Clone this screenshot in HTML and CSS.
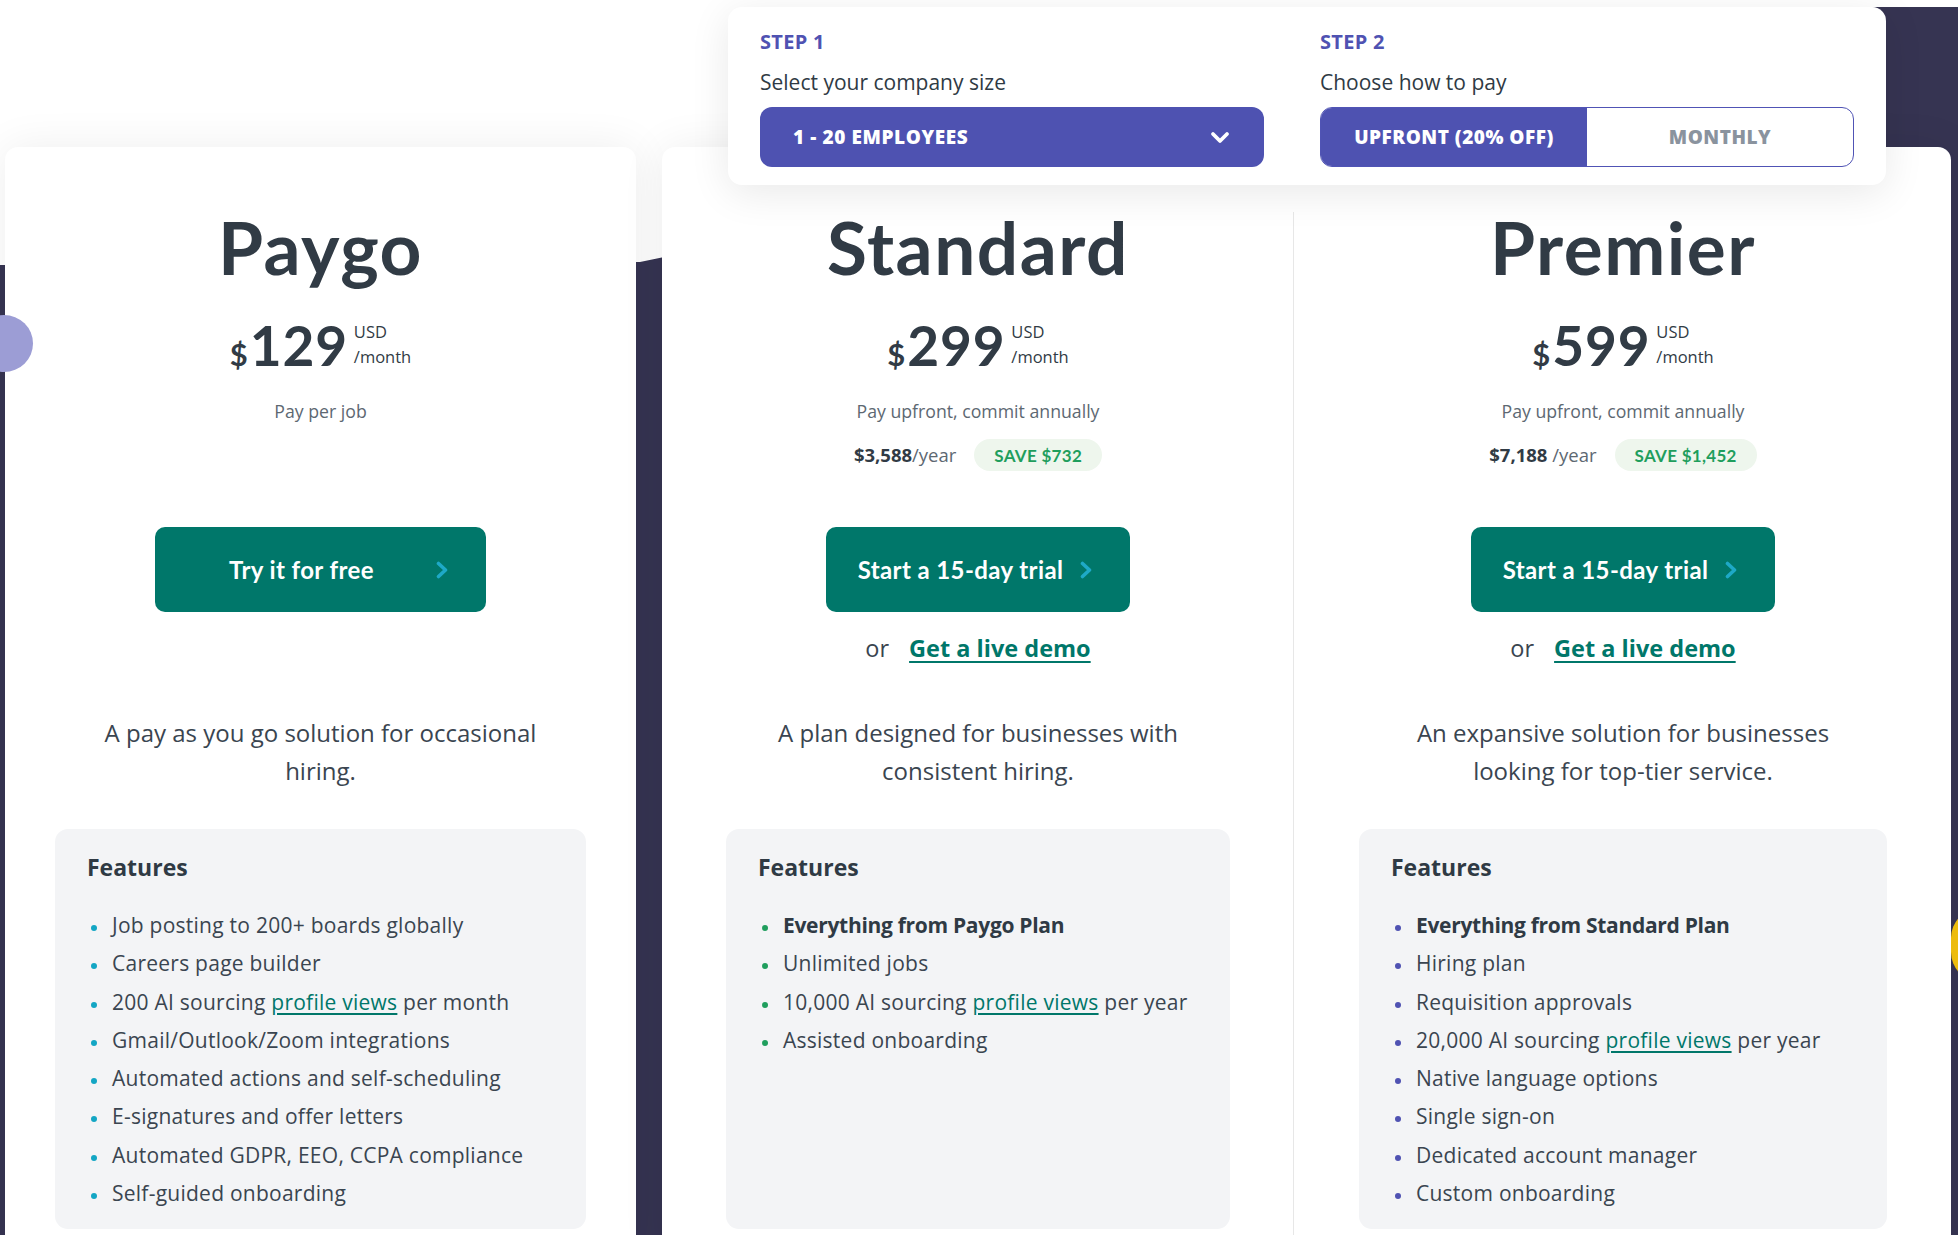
FILE: index.html
```html
<!DOCTYPE html>
<html lang="en">
<head>
<meta charset="utf-8">
<title>Pricing</title>
<link rel="stylesheet" href="styles.css">
</head>
<body>
<div class="page">
  <div class="bg-shape"></div>
  <div class="dot dot-yellow"></div>

  <div class="plans">
    <section class="card card-single">
      <div class="plan plan-paygo">
        <h2 class="plan-title">Paygo</h2>
        <div class="price"><span class="cur">$</span><span class="amount">129</span><span class="per">USD<br>/month</span></div>
        <div class="meta">
          <p class="note">Pay per job</p>
        </div>
        <a class="btn btn-wide" href="#"><span>Try it for free</span><svg class="chev" viewBox="0 0 13 18" width="13" height="18"><path d="M2.5 2.5 L9.5 9 L2.5 15.5" fill="none" stroke="#1ea9c7" stroke-width="3.6" stroke-linecap="round" stroke-linejoin="round"/></svg></a>
        <div class="demo"></div>
        <p class="desc">A pay as you go solution for occasional<br>hiring.</p>
        <div class="features">
          <h3>Features</h3>
          <ul>
            <li>Job posting to 200+ boards globally</li>
            <li>Careers page builder</li>
            <li>200 AI sourcing <a href="#">profile views</a> per month</li>
            <li>Gmail/Outlook/Zoom integrations</li>
            <li>Automated actions and self-scheduling</li>
            <li>E-signatures and offer letters</li>
            <li>Automated GDPR, EEO, CCPA compliance</li>
            <li>Self-guided onboarding</li>
          </ul>
        </div>
      </div>
    </section>

    <section class="card card-duo">
      <div class="plan plan-standard">
        <h2 class="plan-title">Standard</h2>
        <div class="price"><span class="cur">$</span><span class="amount">299</span><span class="per">USD<br>/month</span></div>
        <div class="meta">
          <p class="note">Pay upfront, commit annually</p>
          <div class="yearly"><span class="yr"><b>$3,588</b>/year</span><span class="save">SAVE $732</span></div>
        </div>
        <a class="btn" href="#"><span>Start a 15-day trial</span><svg class="chev" viewBox="0 0 13 18" width="13" height="18"><path d="M2.5 2.5 L9.5 9 L2.5 15.5" fill="none" stroke="#1ea9c7" stroke-width="3.6" stroke-linecap="round" stroke-linejoin="round"/></svg></a>
        <div class="demo"><span class="or">or</span><a href="#">Get a live demo</a></div>
        <p class="desc">A plan designed for businesses with<br>consistent hiring.</p>
        <div class="features">
          <h3>Features</h3>
          <ul>
            <li><strong>Everything from Paygo Plan</strong></li>
            <li>Unlimited jobs</li>
            <li>10,000 AI sourcing <a href="#">profile views</a> per year</li>
            <li>Assisted onboarding</li>
          </ul>
        </div>
      </div>
      <div class="divider"></div>
      <div class="plan plan-premier">
        <h2 class="plan-title">Premier</h2>
        <div class="price"><span class="cur">$</span><span class="amount">599</span><span class="per">USD<br>/month</span></div>
        <div class="meta">
          <p class="note">Pay upfront, commit annually</p>
          <div class="yearly"><span class="yr"><b>$7,188</b> /year</span><span class="save">SAVE $1,452</span></div>
        </div>
        <a class="btn" href="#"><span>Start a 15-day trial</span><svg class="chev" viewBox="0 0 13 18" width="13" height="18"><path d="M2.5 2.5 L9.5 9 L2.5 15.5" fill="none" stroke="#1ea9c7" stroke-width="3.6" stroke-linecap="round" stroke-linejoin="round"/></svg></a>
        <div class="demo"><span class="or">or</span><a href="#">Get a live demo</a></div>
        <p class="desc">An expansive solution for businesses<br>looking for top-tier service.</p>
        <div class="features">
          <h3>Features</h3>
          <ul>
            <li><strong>Everything from Standard Plan</strong></li>
            <li>Hiring plan</li>
            <li>Requisition approvals</li>
            <li>20,000 AI sourcing <a href="#">profile views</a> per year</li>
            <li>Native language options</li>
            <li>Single sign-on</li>
            <li>Dedicated account manager</li>
            <li>Custom onboarding</li>
          </ul>
        </div>
      </div>
    </section>
  </div>

  <div class="dot dot-purple"></div>

  <div class="steps">
    <div class="step step-one">
      <div class="step-label">STEP 1</div>
      <div class="step-sub">Select your company size</div>
      <div class="select"><span>1 - 20 EMPLOYEES</span><svg viewBox="0 0 20 13" width="20" height="13"><path d="M3 3 L10 10 L17 3" fill="none" stroke="#ffffff" stroke-width="3.8" stroke-linecap="round" stroke-linejoin="round"/></svg></div>
    </div>
    <div class="step step-two">
      <div class="step-label">STEP 2</div>
      <div class="step-sub">Choose how to pay</div>
      <div class="toggle"><span class="opt opt-on">UPFRONT (20% OFF)</span><span class="opt">MONTHLY</span></div>
    </div>
  </div>
</div>
</body>
</html>
```
FILE: styles.css
```css
html, body {
  margin: 0;
  padding: 0;
  overflow: hidden;
  background: #ffffff;
}

body {
  font-family: "Open Sans", "Liberation Sans", sans-serif;
  color: #333d47;
}

.page {
  position: relative;
  width: 1958px;
  height: 1235px;
  overflow: hidden;
  background: #ffffff;
}

.bg-shape {
  position: absolute;
  left: 0;
  top: 0;
  width: 100%;
  height: 100%;
  background: #363452;
  clip-path: polygon(0 265px, 640px 262px, 1876px 7px, 100% 7px, 100% 100%, 0 100%);
}

.dot {
  position: absolute;
  border-radius: 50%;
}

.dot-yellow {
  width: 60px;
  height: 74px;
  left: 1951px;
  top: 908px;
  border-radius: 30px 0 0 30px;
  background: #f4c20d;
}

.dot-purple {
  width: 58px;
  height: 57px;
  left: -25px;
  top: 315px;
  background: #9c9dd5;
  z-index: 3;
}

.plans {
  position: relative;
  z-index: 1;
  display: grid;
  grid-template-columns: 631px 1289px;
  column-gap: 26px;
  padding: 147px 7px 0 5px;
  align-items: stretch;
}

.card {
  background: #ffffff;
  border-radius: 13px;
  box-shadow: 0 0 44px rgba(0, 0, 0, 0.07);
}

.card-duo {
  display: grid;
  grid-template-columns: 631px 1px 1fr;
}

.divider {
  background: #e7e7e7;
  margin-top: 65px;
}

.plan {
  display: flex;
  flex-direction: column;
  align-items: center;
  padding-top: 65px;
  padding-bottom: 30px;
}

.plan-paygo { padding-left: 50px; padding-right: 50px; }
.plan-standard { padding-left: 64px; padding-right: 63px; }
.plan-premier { padding-left: 65px; padding-right: 64px; }

.plan-title {
  margin: 0;
  font-family: "Lato", "Liberation Sans", sans-serif;
  font-size: 73px;
  line-height: 70px;
  font-weight: 700;
  color: #313b45;
  letter-spacing: 1.5px;
}

.price {
  margin-top: 37px;
  display: flex;
  align-items: baseline;
  height: 52px;
  color: #313b45;
  font-family: "Lato", "Liberation Sans", sans-serif;
}

.cur {
  font-size: 31px;
  font-weight: 700;
  margin-right: 2px;
}

.amount {
  font-size: 55px;
  line-height: 52px;
  font-weight: 700;
  letter-spacing: 0.8px;
}

.per {
  align-self: flex-start;
  margin-top: 0;
  margin-left: 6px;
  font-family: "Open Sans", "Liberation Sans", sans-serif;
  font-size: 16.5px;
  line-height: 25px;
  color: #313b45;
}

.meta {
  box-sizing: border-box;
  height: 156px;
  padding-top: 28px;
  display: flex;
  flex-direction: column;
  align-items: center;
}

.note {
  margin: 0;
  font-size: 17.7px;
  line-height: 24px;
  color: #5d6872;
}

.yearly {
  margin-top: 16px;
  display: flex;
  align-items: center;
  gap: 18px;
  height: 32px;
}

.yr {
  font-size: 18.5px;
  line-height: 32px;
  color: #5d6872;
}

.yr b {
  color: #313b45;
  font-weight: 700;
}

.save {
  display: inline-flex;
  align-items: center;
  height: 32px;
  padding: 0 20px;
  border-radius: 16px;
  background: #eef6ed;
  color: #1f9e5d;
  font-family: "Lato", "Liberation Sans", sans-serif;
  font-size: 17px;
  font-weight: 700;
  letter-spacing: 0.3px;
}

.btn {
  box-sizing: border-box;
  height: 85px;
  display: flex;
  align-items: center;
  gap: 17px;
  padding: 0 37px 0 32px;
  border-radius: 10px;
  background: #00776a;
  color: #ffffff;
  text-decoration: none;
  font-family: "Lato", "Liberation Sans", sans-serif;
  font-size: 24px;
  font-weight: 700;
  letter-spacing: 0.4px;
}

.btn-wide {
  width: 331px;
  padding-left: 74px;
  gap: 62px;
}

.chev {
  display: block;
  flex: none;
}

.demo {
  box-sizing: border-box;
  height: 102px;
  padding-top: 20px;
  display: flex;
  align-items: flex-start;
  gap: 20px;
  font-size: 23.5px;
  line-height: 32px;
}

.or {
  color: #3a4550;
}

.demo a {
  color: #00776a;
  font-weight: 700;
  text-decoration: underline;
  text-decoration-thickness: 2px;
  text-underline-offset: 4px;
}

.desc {
  margin: 0;
  text-align: center;
  font-size: 24px;
  line-height: 37.5px;
  color: #3a4550;
}

.features {
  box-sizing: border-box;
  align-self: stretch;
  flex: 1;
  margin-top: 40px;
  padding: 24px 32px 17px;
  background: #f3f4f6;
  border-radius: 13px;
}

.features h3 {
  margin: 0;
  font-size: 23px;
  line-height: 28px;
  font-weight: 700;
  color: #2f3a44;
}

.features ul {
  list-style: none;
  margin: 25px 0 0;
  padding: 0;
}

.features li {
  position: relative;
  padding-left: 25px;
  font-size: 21px;
  line-height: 38.3px;
  letter-spacing: 0.25px;
  color: #3a4550;
}

.features li::before {
  content: "";
  position: absolute;
  left: 4px;
  top: 19px;
  width: 6px;
  height: 6px;
  border-radius: 50%;
  background: #13a6c4;
}

.plan-standard .features li::before { background: #1f9e5d; }
.plan-premier .features li::before { background: #4f52b2; }

.features li strong {
  font-weight: 700;
  letter-spacing: -0.3px;
  color: #2f3a44;
}

.features li a {
  color: #00776a;
  text-decoration: underline;
  text-underline-offset: 3px;
}

.steps {
  position: absolute;
  z-index: 4;
  left: 728px;
  top: 7px;
  width: 1158px;
  height: 178px;
  box-sizing: border-box;
  padding: 23px 0 0 32px;
  display: flex;
  gap: 56px;
  background: #ffffff;
  border-radius: 14px;
  box-shadow: 0 8px 40px rgba(0, 0, 0, 0.09);
}

.step-one { width: 504px; }
.step-two { width: 534px; }

.step-label {
  font-size: 20px;
  line-height: 24px;
  font-weight: 700;
  letter-spacing: 0.3px;
  color: #4f52b2;
}

.step-sub {
  margin-top: 14px;
  font-size: 21px;
  line-height: 28px;
  color: #2f3a44;
}

.select {
  box-sizing: border-box;
  margin-top: 11px;
  height: 60px;
  display: flex;
  align-items: center;
  justify-content: space-between;
  padding: 0 34px 0 33px;
  border-radius: 12px;
  background: #4e52b1;
  color: #ffffff;
  font-size: 19px;
  font-weight: 800;
  letter-spacing: 0.6px;
}

.select svg { display: block; }

.toggle {
  box-sizing: border-box;
  margin-top: 11px;
  height: 60px;
  display: grid;
  grid-template-columns: 266px 1fr;
  border: 1.5px solid #5054b5;
  border-radius: 12px;
  overflow: hidden;
}

.opt {
  display: flex;
  align-items: center;
  justify-content: center;
  font-size: 19px;
  font-weight: 800;
  letter-spacing: 0.5px;
  color: #8a939e;
}

.opt-on {
  background: #4e52b1;
  color: #ffffff;
}
```
